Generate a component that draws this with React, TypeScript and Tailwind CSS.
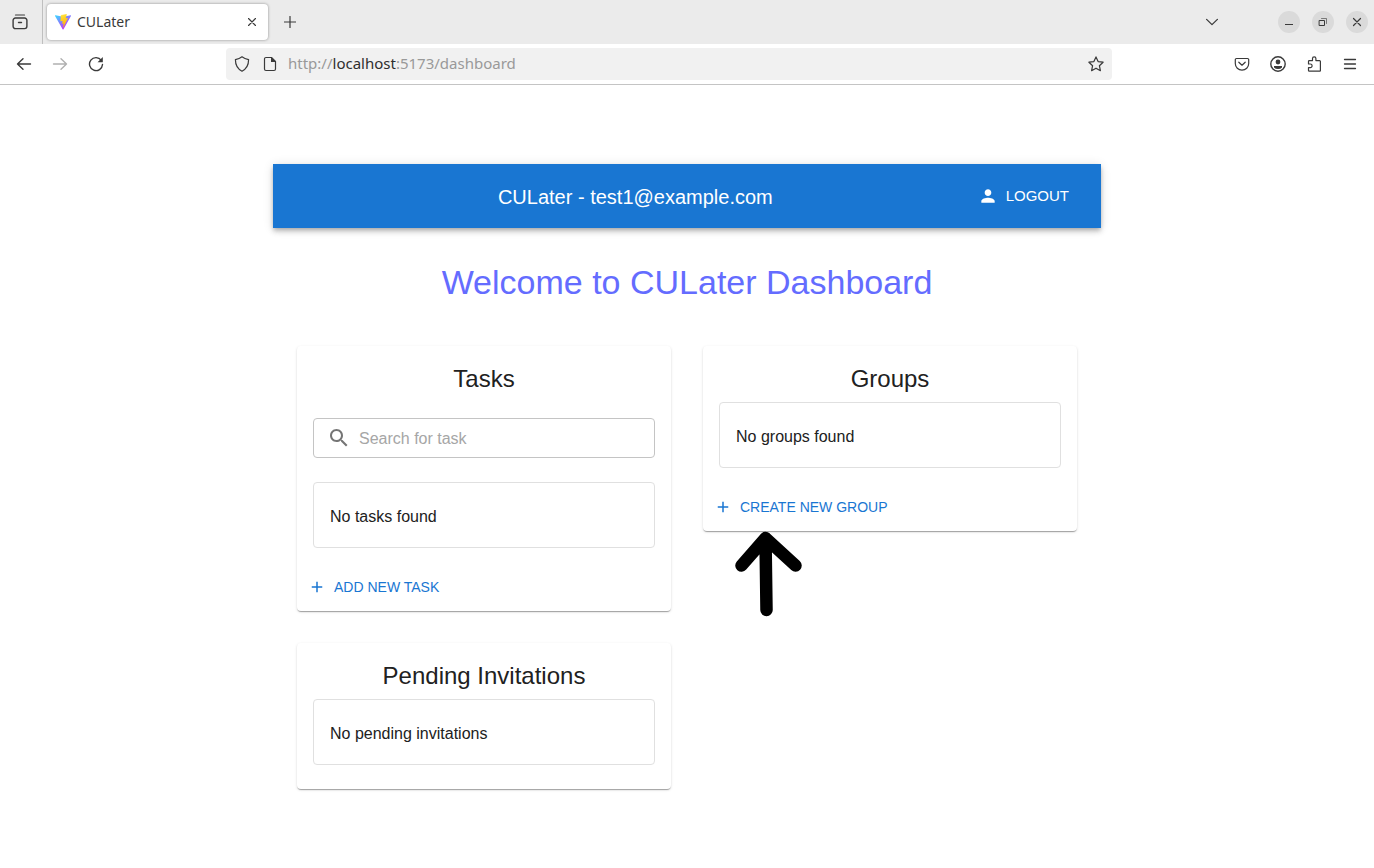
import type { ReactNode } from "react";

function Icon({ size, className, children }: { size: number; className?: string; children: ReactNode }) {
  return (
    <svg
      width={size}
      height={size}
      viewBox="0 0 16 16"
      fill="none"
      stroke="currentColor"
      strokeWidth="1.2"
      strokeLinecap="round"
      strokeLinejoin="round"
      className={className}
      aria-hidden="true"
    >
      {children}
    </svg>
  );
}

function ViteLogo() {
  return (
    <svg width="16" height="16" viewBox="0 0 32 32" aria-hidden="true">
      <defs>
        <linearGradient id="vite-a" x1="0" y1="0.1" x2="0.6" y2="0.9">
          <stop offset="0" stopColor="#41d1ff" />
          <stop offset="1" stopColor="#bd34fe" />
        </linearGradient>
        <linearGradient id="vite-b" x1="0.4" y1="0" x2="0.6" y2="1">
          <stop offset="0" stopColor="#ffea83" />
          <stop offset="0.1" stopColor="#ffdd35" />
          <stop offset="1" stopColor="#ffa800" />
        </linearGradient>
      </defs>
      <path
        fill="url(#vite-a)"
        d="M31.9 6.2 17 32.6a1 1 0 0 1-1.800 0L.1 6.2A1 1 0 0 1 1.200 4.700l14.900 2.700a1 1 0 0 0 .4 0L31 4.700a1 1 0 0 1 .9 1.500z"
        transform="translate(0 -2)"
      />
      <path
        fill="url(#vite-b)"
        d="M22.900 0 11.900 2.200a.5.5 0 0 0-.3.4l-.7 11.400a.5.5 0 0 0 .6.500l3.100-.7a.5.5 0 0 1 .6.600l-.9 4.500a.5.5 0 0 0 .6.600l1.900-.6a.5.5 0 0 1 .6.600l-1.400 7c-.1.500.5.700.7.300l.2-.3 8.900-17.800a.5.5 0 0 0-.5-.7l-3.100.6a.5.5 0 0 1-.6-.6l2-7.100a.5.5 0 0 0-.6-.6z"
      />
    </svg>
  );
}

function TabStrip() {
  return (
    <div className="flex h-11 items-center bg-[#ebebeb] text-[#3a3a3a]">
      <div className="flex h-full w-[43px] items-center justify-center border-r border-[#bfbfbf] pr-0.5">
        <button type="button" aria-label="Recent browsing">
          <Icon size={16}>
            <path d="M3.500 1h9" />
            <path d="M3.500 4h9A2.300 2.300 0 0 1 14.900 6.300v6A2.300 2.300 0 0 1 12.600 14.600H3.400A2.300 2.300 0 0 1 1.100 12.300v-6A2.300 2.300 0 0 1 3.500 4z" strokeWidth="1.400" />
            <path d="M6.500 8.500h3" strokeWidth="1.400" />
          </Icon>
        </button>
      </div>
      <div className="ml-1 flex h-9 w-[221px] items-center rounded bg-white px-2 shadow-[0_0_3px_rgba(0,0,0,0.4)]">
        <ViteLogo />
        <span className="ml-1.5 flex-1 text-sm">CULater</span>
        <button type="button" aria-label="Close tab" className="p-1">
          <Icon size={8}>
            <path d="M1 1l14 14M15 1 1 15" strokeWidth="2.400" />
          </Icon>
        </button>
      </div>
      <button type="button" aria-label="New tab" className="ml-4">
        <Icon size={12}>
          <path d="M8 .5v15M.5 8h15" strokeWidth="1.600" />
        </Icon>
      </button>
      <div className="flex-1" />
      <button type="button" aria-label="List all tabs" className="mr-[60px]">
        <Icon size={12}>
          <path d="M.8 4.500 8 11.500l7.200-7" strokeWidth="1.700" />
        </Icon>
      </button>
      <div className="flex gap-3 pr-1.5">
        <button type="button" aria-label="Minimize" className="flex size-[22px] items-center justify-center rounded-full bg-[#dadada]">
          <Icon size={16}>
            <path d="M4 10.500h8" strokeWidth="1" strokeLinecap="butt" />
          </Icon>
        </button>
        <button type="button" aria-label="Restore" className="flex size-[22px] items-center justify-center rounded-full bg-[#dadada]">
          <Icon size={16}>
            <path d="M4.500 6.500h5v5h-5z" strokeWidth="1" strokeLinejoin="miter" />
            <path d="M6.500 4.500h5v5" strokeWidth="1" strokeLinejoin="miter" opacity="0.600" />
          </Icon>
        </button>
        <button type="button" aria-label="Close" className="flex size-[22px] items-center justify-center rounded-full bg-[#dadada]">
          <Icon size={16}>
            <path d="M4.500 4.500l7 7M11.500 4.500l-7 7" strokeWidth="1.200" />
          </Icon>
        </button>
      </div>
    </div>
  );
}

function NavBar() {
  return (
    <div className="flex h-[41px] items-center border-b border-[#c4c4c4] bg-white text-[#3a3a3a]">
      <div className="flex w-[226px] shrink-0 gap-5 pl-4">
        <button type="button" aria-label="Back">
          <Icon size={16}>
            <path d="M14.500 8H1.500M7 2.800 1.500 8 7 13.200" strokeWidth="1.400" />
          </Icon>
        </button>
        <button type="button" aria-label="Forward" className="text-[#b0b0b0]">
          <Icon size={16}>
            <path d="M1.500 8h13M9 2.800 14.500 8 9 13.200" strokeWidth="1.400" />
          </Icon>
        </button>
        <button type="button" aria-label="Reload">
          <Icon size={16}>
            <path d="M13.300 4.300A6.500 6.500 0 1 0 14.500 8.500" strokeWidth="1.400" />
            <path d="M14.800 1v5.200H9.600z" fill="currentColor" stroke="none" />
          </Icon>
        </button>
      </div>
      <div className="flex h-8 max-w-[886px] min-w-0 flex-1 items-center rounded bg-[#f1f1f1] px-2">
        <Icon size={16}>
          <path d="M8 .8c2 1.600 4 2.300 6.600 2.800 0 5-1.600 9.200-6.600 11.600C3 12.800 1.400 8.600 1.400 3.600 4 3.100 6 2.400 8 .8z" />
        </Icon>
        <Icon size={16} className="ml-3">
          <path d="M9.500 1.500H4A1.500 1.500 0 0 0 2.500 3v10A1.500 1.500 0 0 0 4 14.500h8a1.500 1.500 0 0 0 1.500-1.500V5.500z" />
          <path d="M9 1v5h5z" fill="currentColor" stroke="none" />
        </Icon>
        <a href="http://localhost:5173/dashboard" className="ml-2.5 flex-1 pb-0.5 text-[15px] leading-5 text-[#999]">
          http://<span className="text-[#2e2e2e]">localhost</span>:5173/dashboard
        </a>
        <button type="button" aria-label="Bookmark this page">
          <Icon size={16}>
            <path d="M8 .9l2.100 4.700 5 .6-3.700 3.500 1 5L8 12.200l-4.400 2.500 1-5L.9 6.200l5-.6z" />
          </Icon>
        </button>
      </div>
      <div className="ml-auto flex shrink-0 justify-end gap-5 pr-4 pl-4">
        <button type="button" aria-label="Save to Pocket">
          <Icon size={16}>
            <path d="M2.500 2.500h11a1.200 1.200 0 0 1 1.200 1.200V7.500a6.700 6.700 0 0 1-13.400 0V3.700a1.200 1.200 0 0 1 1.200-1.200z" />
            <path d="M4.800 6.200 8 9.200l3.200-3" />
          </Icon>
        </button>
        <button type="button" aria-label="Account">
          <Icon size={16}>
            <circle cx="8" cy="8" r="7.200" strokeWidth="1.400" />
            <circle cx="8" cy="6" r="2.400" fill="currentColor" stroke="none" />
            <path d="M4 10h8v1.500q-1.500 1.500-4 1.500t-4-1.500z" fill="currentColor" stroke="none" />
          </Icon>
        </button>
        <button type="button" aria-label="Extensions">
          <Icon size={16}>
            <path d="M2.500 7.500V5.400a.8.8 0 0 1 .8-.8h3.200V2.600a1.700 1.700 0 0 1 3.400 0v2h3.700a.8.8 0 0 1 .8.8v9a.8.8 0 0 1-.8.8H3.300a.8.8 0 0 1-.8-.8v-2.800h1.800a1.800 1.800 0 0 0 0-3.600H2.500z" />
          </Icon>
        </button>
        <button type="button" aria-label="Open application menu">
          <Icon size={16}>
            <path d="M2.500 3.500h11M2.500 8h11M2.500 12.500h11" strokeWidth="1.300" />
          </Icon>
        </button>
      </div>
    </div>
  );
}

function Card({ title, action, children }: { title: string; action?: string; children: ReactNode }) {
  return (
    <section className="rounded bg-white shadow-[0_2px_1px_-1px_rgba(0,0,0,0.2),0_1px_1px_0_rgba(0,0,0,0.14),0_1px_3px_0_rgba(0,0,0,0.12)]">
      <div className={action ? "p-4" : "px-4 pt-4 pb-6"}>
        <h2 className="mb-1.5 text-center text-2xl leading-[34px]">{title}</h2>
        {children}
      </div>
      {action && (
        <div className="px-2 pt-2 pb-[9px]">
          <button type="button" className="flex h-[30px] items-center gap-2 rounded px-1 text-sm text-[#1976d2] uppercase">
            <svg width="18" height="18" viewBox="0 0 24 24" fill="currentColor" className="-ml-px" aria-hidden="true">
              <path d="M19 13h-6v6h-2v-6H5v-2h6V5h2v6h6v2z" />
            </svg>
            {action}
          </button>
        </div>
      )}
    </section>
  );
}

function EmptyBox({ children }: { children: ReactNode }) {
  return <p className="rounded border border-[#e0e0e0] px-4 pt-[22px] pb-[18px] text-base">{children}</p>;
}

function HandDrawnArrow() {
  return (
    <svg
      width="70"
      height="88"
      viewBox="0 0 70 88"
      fill="none"
      stroke="#000"
      strokeWidth="12.5"
      strokeLinecap="round"
      strokeLinejoin="round"
      className="absolute top-full left-8 overflow-visible"
      aria-hidden="true"
    >
      <path d="M30.500 7 31.500 79M6.500 34.500 30.500 7 60.500 34.500" />
    </svg>
  );
}

export default function App() {
  return (
    <div className="min-h-screen bg-white font-['Liberation_Sans',Arial,sans-serif] text-[#212121]">
      <header className="font-['Noto_Sans',sans-serif]">
        <TabStrip />
        <NavBar />
      </header>
      <main className="mx-auto max-w-[828px] pt-[79px] pb-12">
        <div className="flex h-16 items-center bg-[#1976d2] px-6 text-white shadow-[0_2px_4px_-1px_rgba(0,0,0,0.2),0_4px_5px_0_rgba(0,0,0,0.14),0_1px_10px_0_rgba(0,0,0,0.12)]">
          <div className="flex-1 pt-0.5 text-center text-xl">CULater - test1@example.com</div>
          <button type="button" className="flex items-center gap-2 rounded py-1.5 pr-2 pl-1 text-[15px] uppercase">
            <svg width="20" height="20" viewBox="0 0 24 24" fill="currentColor" aria-hidden="true">
              <path d="M12 12c2.210 0 4-1.790 4-4s-1.790-4-4-4-4 1.790-4 4 1.790 4 4 4zm0 2c-2.670 0-8 1.340-8 4v2h16v-2c0-2.660-5.330-4-8-4z" />
            </svg>
            Logout
          </button>
        </div>
        <h1 className="mt-8 text-center text-[34px] leading-[44px] text-[#646cff]">Welcome to CULater Dashboard</h1>
        <div className="mt-[42px] grid grid-cols-1 items-start gap-8 px-6 sm:grid-cols-2">
          <Card title="Tasks" action="Add new task">
            <label className="mt-[22px] mb-6 flex h-10 items-center rounded border border-[#c4c4c4] px-[13px]">
              <svg width="24" height="24" viewBox="0 0 24 24" fill="#757575" aria-hidden="true">
                <path d="M15.500 14h-.79l-.28-.27C15.410 12.590 16 11.110 16 9.500 16 5.910 13.090 3 9.500 3S3 5.910 3 9.500 5.910 16 9.500 16c1.610 0 3.090-.59 4.230-1.570l.27.28v.79l5 4.990L20.490 19l-4.990-5zm-6 0C7.010 14 5 11.990 5 9.500S7.010 5 9.500 5 14 7.010 14 9.500 11.990 14 9.500 14z" />
              </svg>
              <input
                type="text"
                aria-label="Search for task"
                placeholder="Search for task"
                className="ml-2 min-w-0 flex-1 bg-transparent pt-0.5 text-base outline-none placeholder:text-[#a6a6a6]"
              />
            </label>
            <EmptyBox>No tasks found</EmptyBox>
          </Card>
          <div className="relative">
            <Card title="Groups" action="Create new group">
              <EmptyBox>No groups found</EmptyBox>
            </Card>
            <HandDrawnArrow />
          </div>
          <Card title="Pending Invitations">
            <EmptyBox>No pending invitations</EmptyBox>
          </Card>
        </div>
      </main>
    </div>
  );
}
